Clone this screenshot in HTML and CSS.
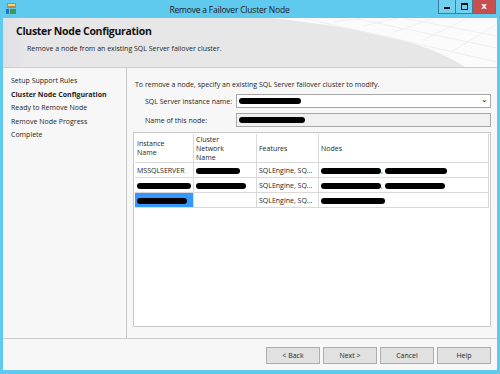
FILE: index.html
```html
<!DOCTYPE html>
<html lang="en">
<head>
    <meta charset="UTF-8">
    <title>Remove a Failover Cluster Node</title>
    <link rel="stylesheet" href="styles.css">
</head>
<body>
    <div class="window">
        <!-- Title bar -->
        <div class="titlebar">
            <svg class="app-icon" width="12" height="13" viewBox="0 0 12 13">
                <rect x="2" y="1" width="9" height="5" fill="#b88a3a"/>
                <rect x="3" y="2" width="7" height="2" fill="#f2d27a"/>
                <rect x="5" y="7" width="6" height="5" fill="#3f9a4a"/>
                <rect x="1" y="7" width="3" height="5" fill="#2a6fc4"/>
            </svg>
            <span class="title">Remove a Failover Cluster Node</span>
            <div class="controls">
                <span class="ctl min"><i></i></span>
                <span class="ctl max"><i></i></span>
                <span class="ctl close">x</span>
            </div>
        </div>

        <div class="frame">
            <!-- Header -->
            <div class="header">
                <svg class="mesh" width="494" height="49" viewBox="0 0 494 49" preserveAspectRatio="none">
                    <path d="M268 0 C340 8 420 20 462 49 L494 49 L494 0 Z" fill="#fbfbfb"/>
                    <path d="M330 4 L360 0 M360 8 L395 0 M392 14 L430 0 M420 22 L465 0 M448 34 L494 6 M300 0 L494 44 M350 0 L494 30 M400 0 L494 18" stroke="#eeeeee" stroke-width="1" fill="none"/>
                </svg>
                <h1>Cluster Node Configuration</h1>
                <p>Remove a node from an existing SQL Server failover cluster.</p>
            </div>

            <div class="content">
                <!-- Steps -->
                <ul class="nav">
                    <li>Setup Support Rules</li>
                    <li class="current">Cluster Node Configuration</li>
                    <li>Ready to Remove Node</li>
                    <li>Remove Node Progress</li>
                    <li>Complete</li>
                </ul>

                <!-- Main panel -->
                <div class="main">
                    <p class="intro">To remove a node, specify an existing SQL Server failover cluster to modify.</p>
                    <div class="field">
                        <label>SQL Server instance name:</label>
                        <div class="combo"><span class="blot" style="width:62px"></span><span class="arrow">&#8964;</span></div>
                    </div>
                    <div class="field">
                        <label>Name of this node:</label>
                        <div class="textbox"><span class="blot" style="width:66px"></span></div>
                    </div>

                    <div class="grid">
                        <table>
                            <thead>
                                <tr>
                                    <th class="c1">Instance<br>Name</th>
                                    <th class="c2">Cluster<br>Network<br>Name</th>
                                    <th class="c3">Features</th>
                                    <th>Nodes</th>
                                </tr>
                            </thead>
                            <tbody>
                                <tr>
                                    <td>MSSQLSERVER</td>
                                    <td><span class="blot" style="width:44px"></span></td>
                                    <td>SQLEngine, SQ...</td>
                                    <td><span class="blot" style="width:60px"></span>, <span class="blot" style="width:62px"></span></td>
                                </tr>
                                <tr>
                                    <td><span class="blot" style="width:54px"></span></td>
                                    <td><span class="blot" style="width:50px"></span></td>
                                    <td>SQLEngine, SQ...</td>
                                    <td><span class="blot" style="width:60px"></span>, <span class="blot" style="width:60px"></span></td>
                                </tr>
                                <tr>
                                    <td class="selected"><span class="blot" style="width:50px"></span></td>
                                    <td></td>
                                    <td>SQLEngine, SQ...</td>
                                    <td><span class="blot" style="width:64px"></span></td>
                                </tr>
                            </tbody>
                        </table>
                    </div>
                </div>
            </div>

            <!-- Buttons -->
            <div class="footer">
                <button>&lt; Back</button>
                <button>Next &gt;</button>
                <button>Cancel</button>
                <button>Help</button>
                <span class="grip"></span>
            </div>
        </div>
    </div>
</body>
</html>
```

FILE: styles.css
```css
body {
    margin: 0;
    font-family: "Open Sans", "Noto Sans", sans-serif;
    font-size: 7px;
    color: #1e1e1e;
}
.window {
    width: 500px;
    height: 374px;
    box-sizing: border-box;
    padding: 0 3px 4px;
    background: #5fc9ee;
    display: flex;
    flex-direction: column;
}
.titlebar {
    height: 18px;
    display: flex;
    align-items: center;
}
.app-icon {
    margin-left: 2px;
    margin-top: -2px;
}
.title {
    flex: 1;
    text-align: center;
    font-size: 8.5px;
    letter-spacing: -0.2px;
    color: #1a1a1a;
    margin-left: 4px;
}
.controls {
    display: flex;
    align-self: flex-start;
    margin-right: 1px;
}
.ctl {
    height: 14px;
    border: 1px solid #3a7fa0;
    border-top: none;
    box-sizing: border-box;
    display: flex;
    align-items: center;
    justify-content: center;
}
.min, .max {
    width: 17px;
    background: #6fd0f0;
    border-right: none;
}
.min i {
    width: 6px;
    height: 2px;
    background: #111;
    margin-top: 3px;
}
.max i {
    width: 5px;
    height: 4px;
    border: 1px solid #111;
    border-top-width: 2px;
}
.close {
    width: 24px;
    background: #c7504f;
    color: #fff;
    font-weight: bold;
    font-size: 9px;
    padding-bottom: 2px;
}
.frame {
    flex: 1;
    background: #f7f7f7;
    display: flex;
    flex-direction: column;
}
.header {
    height: 49px;
    border-bottom: 1px solid #cdcdcd;
    background: linear-gradient(to right, #dedee6 0, #e6e6e8 20px, #e7e7e7 100%);
    position: relative;
    overflow: hidden;
}
.mesh {
    position: absolute;
    left: 0;
    top: 0;
}
.header h1 {
    position: relative;
    margin: 0;
    padding: 6px 0 0 13px;
    font-size: 10.5px;
    letter-spacing: -0.3px;
    font-weight: bold;
    color: #111;
}
.header p {
    position: relative;
    margin: 6px 0 0 24px;
}
.content {
    flex: 1;
    display: flex;
}
.nav {
    width: 124px;
    margin: 0;
    padding: 6px 0 0 8px;
    box-sizing: border-box;
    list-style: none;
    border-right: 1px solid #c6c6c6;
}
.nav li {
    line-height: 13.5px;
}
.nav .current {
    font-weight: bold;
}
.main {
    flex: 1;
    padding: 12px 6px 0 6px;
}
.intro {
    margin: 0 0 5px 2px;
}
.field {
    display: flex;
    align-items: center;
    margin-bottom: 5px;
}
.field label {
    width: 91px;
    padding-left: 12px;
}
.combo,
.textbox {
    flex: 1;
    height: 14px;
    box-sizing: border-box;
    border: 1px solid #a8a8a8;
    background: #fff;
    display: flex;
    align-items: center;
    padding-left: 2px;
}
.textbox {
    background: #f0f0f0;
}
.arrow {
    margin-left: auto;
    margin-right: 2px;
    margin-top: -5px;
    font-size: 8px;
}
.blot {
    display: inline-block;
    height: 6px;
    background: #000;
    border-radius: 3px;
    vertical-align: middle;
}
.grid {
    height: 195px;
    box-sizing: border-box;
    border: 1px solid #c9c9c9;
    background: #fff;
    padding: 1px;
}
table {
    width: 100%;
    border-collapse: collapse;
}
th,
td {
    border: 1px solid #d9d9d9;
    text-align: left;
    padding: 0 2px;
    font-weight: normal;
    line-height: 9px;
    white-space: nowrap;
}
th {
    height: 28px;
    vertical-align: middle;
    border-top: none;
}
th:first-child,
td:first-child {
    border-left: none;
}
td {
    height: 14px;
}
.c1 {
    width: 54px;
}
.c2 {
    width: 58px;
}
.c3 {
    width: 57px;
}
td.selected {
    background: #3399ff;
}
.footer {
    height: 31px;
    border-top: 1px solid #cdcdcd;
    display: flex;
    justify-content: flex-end;
    align-items: center;
    gap: 3px;
    padding-right: 6px;
    position: relative;
}
button {
    width: 54px;
    height: 17px;
    border: 1px solid #adadad;
    background: #e1e1e1;
    font-family: inherit;
    font-size: 7px;
    color: #1e1e1e;
    padding: 0;
    margin-top: 1px;
}
.grip {
    position: absolute;
    right: 1px;
    bottom: 1px;
    width: 4px;
    height: 4px;
    background: radial-gradient(circle, #b5b5b5 40%, transparent 50%) 0 0 / 2px 2px;
}
```
